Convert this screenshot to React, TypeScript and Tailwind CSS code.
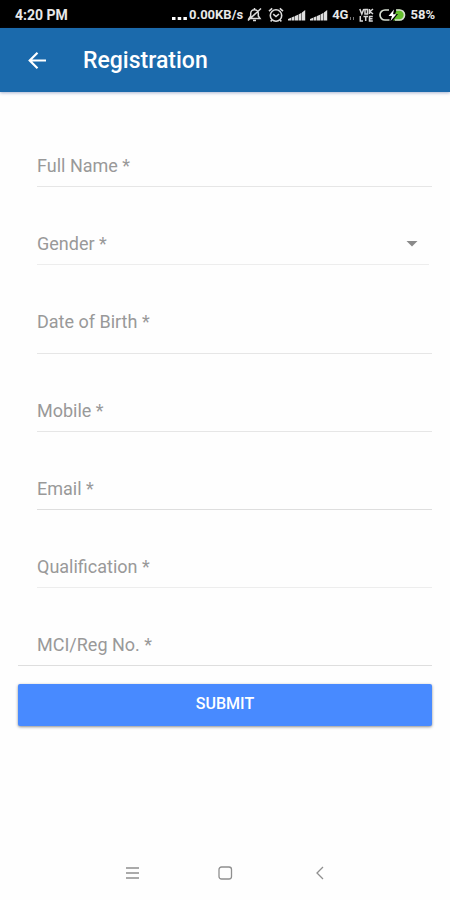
import type { ReactNode } from 'react'

interface Field {
  id: string
  label: string
  row: string
  type?: string
}

const lineRow = 'ml-[19px] border-[#e6e6e6] pb-[10px]'

const personalFields: Field[] = [{ id: 'fullName', label: 'Full Name *', row: lineRow }]

const otherFields: Field[] = [
  { id: 'birthDate', label: 'Date of Birth *', row: 'ml-[19px] border-[#e6e6e6] pb-[21px]' },
  { id: 'mobile', label: 'Mobile *', row: lineRow, type: 'tel' },
  { id: 'email', label: 'Email *', row: 'ml-[19px] border-[#dedede] pb-[10px]', type: 'email' },
  { id: 'qualification', label: 'Qualification *', row: 'ml-[19px] border-[#ededed] pb-[10px]' },
  { id: 'regNo', label: 'MCI/Reg No. *', row: 'pl-[19px] border-[#dedede] pb-[10px]' },
]

function FormRow({ id, label, row, children }: Field & { children: ReactNode }) {
  return (
    <div className={`mt-9 flex items-center border-b pt-[11px] ${row}`}>
      <label htmlFor={id} className="shrink-0 text-lg leading-5 text-[#999]">
        {label}
      </label>
      {children}
    </div>
  )
}

function TextRow(field: Field) {
  return (
    <FormRow {...field}>
      <input
        id={field.id}
        type={field.type ?? 'text'}
        className="ml-2 h-5 min-w-0 flex-1 bg-transparent text-lg text-[#333] outline-none"
      />
    </FormRow>
  )
}

function SignalIcon() {
  return (
    <svg width="18" height="13" viewBox="0 0 18 13" fill="#dedede">
      <path d="M0 12.5V11l3-1.200v2.700zM3.500 12.500V9.600L6.500 8.300v4.200zM7 12.500V8.100l3-1.400v5.800zM10.500 12.500v-6l3-1.800v7.800zM14 12.500v-8l3.200-2.500v10.500z" />
    </svg>
  )
}

function StatusBar() {
  return (
    <div className="flex h-7 items-center justify-between bg-black px-[15px] pt-px text-sm leading-5 font-bold text-[#e8e8e8]">
      <span>4:20 PM</span>
      <div className="flex items-center gap-1">
        <div className="flex items-center gap-[2px]">
          <svg width="15" height="14" viewBox="0 0 15 14" fill="#fff">
            <path d="M0 9h3.500v3H0zM5.700 9h3.500v3H5.700zM11.400 9h3.500v3h-3.500z" />
          </svg>
          <span className="text-[13px] leading-5">0.00KB/s</span>
        </div>
        <div className="flex items-center gap-[6px]">
          <svg width="15" height="15" viewBox="0 0 15 15" fill="none" stroke="#dcdcdc" strokeWidth="1.500">
            <path d="M2 11.500h11L11.300 9V6.500a3.800 3.800 0 0 0-7.600 0V9zM7.500 3V1M6 13.500h3M1 13.500 14 1.500" />
          </svg>
          <svg width="16" height="16" viewBox="0 0 16 16" fill="none" stroke="#dcdcdc" strokeWidth="1.600">
            <circle cx="8" cy="8.500" r="5.700" />
            <path d="M1 4.200 4.200 1.300M15 4.200l-3.200-2.900M5.200 7.200 8 9.500l3-2.500M4 12.800l-1.300 1.700M12 12.800l1.300 1.700" />
          </svg>
        </div>
        <SignalIcon />
        <SignalIcon />
        <div className="flex items-end gap-px">
          <span className="text-[13px] leading-5">4G</span>
          <svg width="6" height="12" viewBox="0 0 6 12" stroke="#777" strokeWidth="1">
            <path d="M1.500 4v3M4.500 4v3" />
          </svg>
        </div>
        <svg width="15" height="14" viewBox="0 0 15 14" fill="none" stroke="#d8d8d8" strokeWidth="1.500">
          <path d="M.8 1 2.800 6l2-5M6 1.500h2.500V6H6zM10.500 1v5M14 1l-3 2.500L14 6M1.300 8v5H4M4.500 8.500h4.500M6.700 8.500V13M13.800 8.500h-3.300V13h3.300M10.500 10.700h3" />
        </svg>
        <svg width="28" height="14" viewBox="0 0 28 14" fill="none">
          <path d="M15 12.500h6.500a5.500 5.500 0 0 0 0-11H19l-2 4.500h3z" fill="#63bd2c" />
          <path d="M11 2H7a5 5 0 0 0 0 10h4.500M18 2h3.500a5 5 0 0 1 0 10H17" stroke="#d4dccf" strokeWidth="1.700" />
          <path d="M16 1.500 10.500 8H14l-1.500 5L18.500 6.200H15z" fill="#fff" />
        </svg>
        <span className="text-[13px] leading-5">58%</span>
      </div>
    </div>
  )
}

function SystemNav() {
  return (
    <nav className="mt-auto flex h-[54px] items-center justify-center gap-[77px] text-[#8f8f8f]">
      <button type="button" aria-label="Recent apps">
        <svg width="16" height="16" viewBox="0 0 16 16" stroke="currentColor" strokeWidth="1.300">
          <path d="M2 3h13M2 8h13M2 13h13" />
        </svg>
      </button>
      <button type="button" aria-label="Home">
        <svg width="16" height="16" viewBox="0 0 16 16" fill="none" stroke="currentColor" strokeWidth="1.300">
          <rect x="2" y="2" width="12.500" height="12" rx="2.500" />
        </svg>
      </button>
      <button type="button" aria-label="Back">
        <svg width="16" height="16" viewBox="0 0 16 16" fill="none" stroke="currentColor" strokeWidth="1.300">
          <path d="M13 2 7 8l6 6" />
        </svg>
      </button>
    </nav>
  )
}

export default function App() {
  return (
    <div className="flex min-h-screen flex-col bg-[#fefefe] font-['Roboto',sans-serif]">
      <StatusBar />
      <header className="flex h-16 items-center bg-[#1b6aac] pt-px pl-[27px] text-white shadow-[0_1px_3px_rgba(40,70,140,0.4)]">
        <button type="button" aria-label="Go back">
          <svg width="20" height="20" viewBox="0 0 20 20" fill="none" stroke="currentColor" strokeWidth="2.200">
            <path d="M19 9.500H3M10.500 1.700 2.700 9.500l7.800 7.800" />
          </svg>
        </button>
        <h1 className="ml-9 pt-px text-[23px] leading-7 font-medium">Registration</h1>
      </header>
      <form className="px-[18px] pt-[17px]" onSubmit={(event) => event.preventDefault()}>
        {personalFields.map((field) => (
          <TextRow key={field.id} {...field} />
        ))}
        <FormRow id="gender" label="Gender *" row="ml-[19px] mr-[3px] border-[#ededed] pb-[10px]">
          <select
            id="gender"
            defaultValue=""
            className="ml-2 h-5 min-w-0 flex-1 appearance-none bg-transparent text-lg leading-5 text-[#333] outline-none"
          >
            <option value="" />
            <option value="female">Female</option>
            <option value="male">Male</option>
          </select>
          <svg width="12" height="6" viewBox="0 0 12 6" className="mr-[11px]" fill="#8a8a8a">
            <path d="M.5 0h11L6 5.500z" />
          </svg>
        </FormRow>
        {otherFields.map((field) => (
          <TextRow key={field.id} {...field} />
        ))}
        <button
          type="submit"
          className="mt-[18px] h-[42px] w-full rounded-xs bg-[#488aff] pb-[2px] text-base font-medium text-white shadow-[0_1px_3px_rgba(0,0,0,0.45)]"
        >
          SUBMIT
        </button>
      </form>
      <SystemNav />
    </div>
  )
}
